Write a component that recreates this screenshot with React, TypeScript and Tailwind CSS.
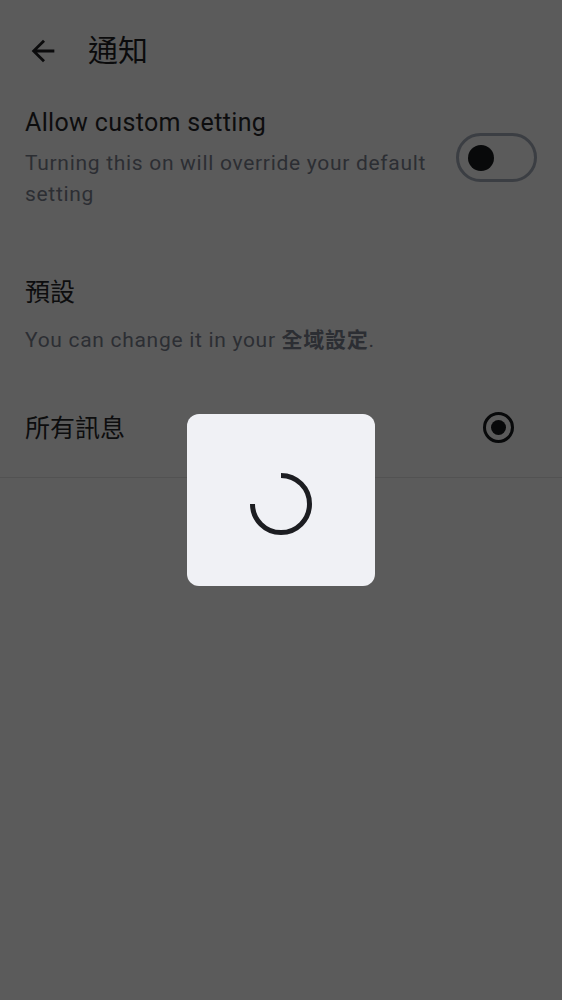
import React from "react";

const font = { fontFamily: 'Roboto, "Noto Sans CJK TC", sans-serif' };

export default function App() {
  return (
    <div className="relative w-[562px] h-[1000px] bg-[#5b5b5b] overflow-hidden" style={font}>
      {/* header */}
      <div className="flex items-center h-[102px] pl-[26px]">
        <svg width="34" height="34" viewBox="0 0 24 24" className="text-[#0b0b0c]">
          <path d="M20 11H7.83l5.59-5.59L12 4l-8 8 8 8 1.41-1.41L7.83 13H20v-2z" fill="currentColor" />
        </svg>
        <div className="ml-[28px] text-[30px] leading-none text-[#0b0b0c]">通知</div>
      </div>

      {/* allow custom setting */}
      <div className="flex items-start pl-[25px] pr-[25px] pt-[5px]">
        <div className="flex-1">
          <div className="text-[25px] leading-[32px] tracking-[0.35px] text-[#0d0d0e]">Allow custom setting</div>
          <div className="text-[21px] leading-[31px] tracking-[0.7px] text-[#2c2e33] mt-[9px]">
            Turning this on will override your default setting
          </div>
        </div>
        <div className="ml-[26px] mt-[26px] w-[81px] h-[49px] rounded-full border-[3px] border-[#3b3e43] flex items-center pl-[9px] shrink-0">
          <div className="w-[26px] h-[26px] rounded-full bg-[#08090a]" />
        </div>
      </div>

      {/* 預設 */}
      <div className="pl-[25px] pt-[67px]">
        <div className="text-[25px] leading-[32px] text-[#0d0d0e]">預設</div>
        <div className="mt-[16px] text-[21px] leading-[30px] tracking-[0.7px] text-[#2c2e33]">
          You can change it in your <span className="font-bold">全域設定</span>.
        </div>
      </div>

      {/* 所有訊息 */}
      <div className="flex items-center justify-between pl-[25px] pr-[48px] mt-[23px] h-[100px] border-b border-[#525252]">
        <div className="text-[25px] leading-[32px] text-[#0d0d0e] mt-[3px]">所有訊息</div>
        <div className="w-[31px] h-[31px] rounded-full border-[3px] border-[#08090a] flex items-center justify-center -mt-[1px]">
          <div className="w-[15px] h-[15px] rounded-full bg-[#08090a]" />
        </div>
      </div>

      {/* loading dialog */}
      <div className="absolute left-[187px] top-[414px] w-[188px] h-[172px] rounded-[12px] bg-[#f0f1f5] flex items-center justify-center">
        <svg width="66" height="66" viewBox="0 0 66 66" className="mt-[8px]">
          <path d="M33 4.5 A28.5 28.5 0 1 1 4.5 33" fill="none" stroke="#1c1d21" strokeWidth="5" />
        </svg>
      </div>
    </div>
  );
}
